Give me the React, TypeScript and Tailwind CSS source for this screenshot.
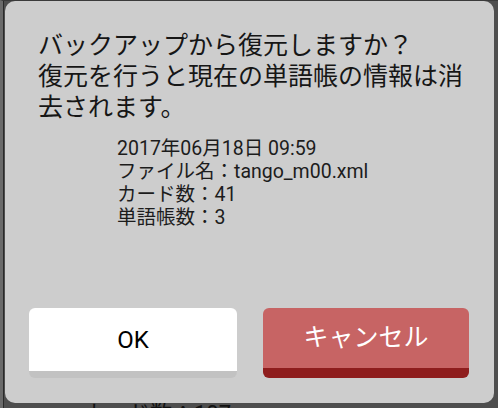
import React from 'react';

const font = "font-['Roboto','Noto_Sans_CJK_JP',sans-serif]";

export default function App() {
    return (
        <div className={`relative w-[498px] h-[408px] overflow-hidden bg-[#4e4e4e] ${font}`}>
            {/* screen underneath */}
            <div className="absolute inset-0 border-l-[3px] border-l-[#6a6a6a] border-t border-t-[#3a3a3a]">
                <div className="h-full border-l border-l-[#2a2a2a] flex flex-col justify-end">
                    <div className="pl-[80px] text-[22px] leading-[22px] text-[#111] mb-[-17px]">
                        カード数：107
                    </div>
                </div>
            </div>

            {/* dialog */}
            <div className="absolute left-[5px] top-[1px] w-[489px] h-[402px] rounded-[10px] bg-[#cdcdcd] flex flex-col pl-[33px] pt-[29px] pb-[25px]">
                <div className="text-[25px] leading-[31px] text-[#161616] w-[430px]">
                    <div>バックアップから復元しますか？</div>
                    <div>復元を行うと現在の単語帳の情報は消去されます。</div>
                </div>

                <div className="mt-[14px] ml-[79px] text-[19.5px] leading-[23px] text-[#1c1c1c]">
                    <div>2017年06月18日 09:59</div>
                    <div>ファイル名：tango_m00.xml</div>
                    <div>カード数：41</div>
                    <div>単語帳数：3</div>
                </div>

                <div className="mt-auto ml-[-9px] mr-[25px] flex gap-[26px]">
                    <button className="w-[208px] h-[70px] rounded-[6px] bg-white border-b-[7px] border-b-[#c2c2c2] text-[24px] text-black">
                        OK
                    </button>
                    <button className="w-[206px] h-[70px] rounded-[6px] bg-[#c76464] border-b-[10px] border-b-[#8e1d1d] text-[25px] text-white">
                        キャンセル
                    </button>
                </div>
            </div>
        </div>
    );
}
